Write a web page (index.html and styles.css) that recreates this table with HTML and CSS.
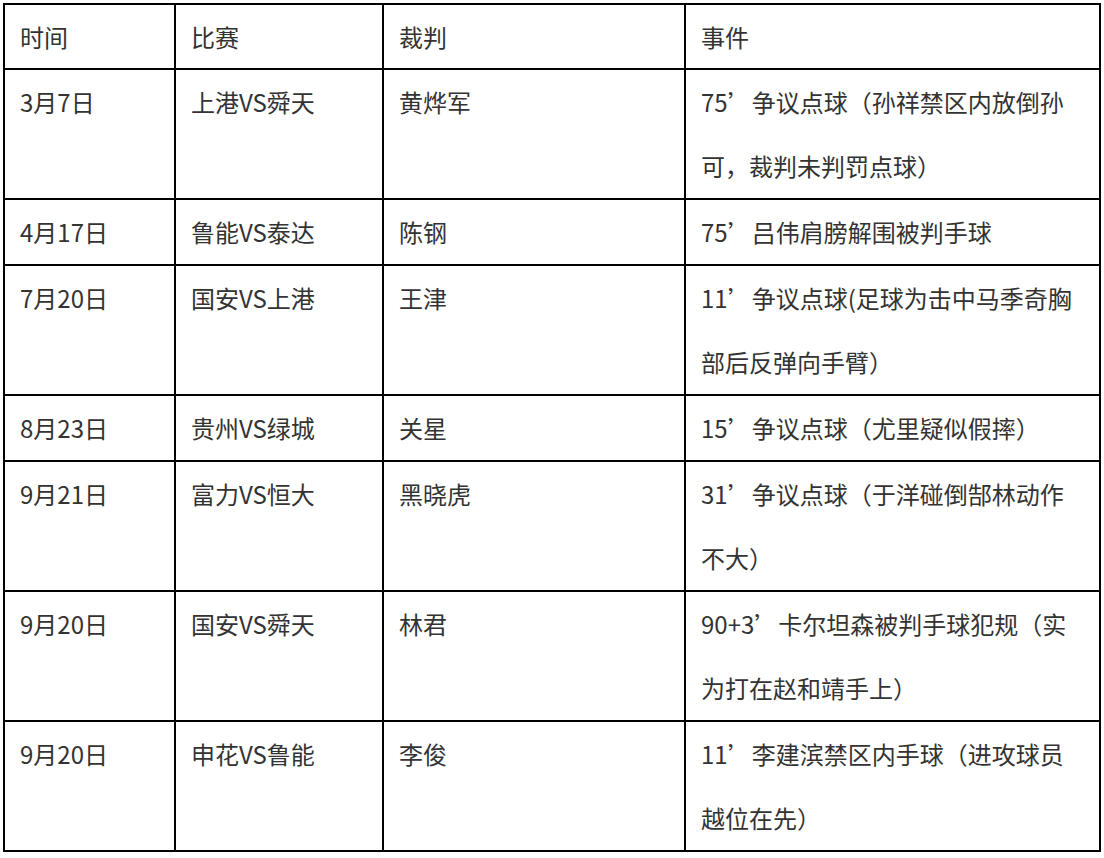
FILE: index.html
```html
<!DOCTYPE html>
<html lang="zh-CN">
<head>
<meta charset="utf-8">
<title>争议判罚</title>
<link rel="stylesheet" href="styles.css">
</head>
<body>
<div class="page">
<table class="calls">
  <colgroup>
    <col class="c-date">
    <col class="c-match">
    <col class="c-ref">
    <col class="c-event">
  </colgroup>
  <thead>
    <tr><th>时间</th><th>比赛</th><th>裁判</th><th>事件</th></tr>
  </thead>
  <tbody>
    <tr><td>3月7日</td><td>上港VS舜天</td><td>黄烨军</td><td>75’争议点球（孙祥禁区内放倒孙可，裁判未判罚点球）</td></tr>
    <tr><td>4月17日</td><td>鲁能VS泰达</td><td>陈钢</td><td>75’吕伟肩膀解围被判手球</td></tr>
    <tr><td>7月20日</td><td>国安VS上港</td><td>王津</td><td>11’争议点球(足球为击中马季奇胸部后反弹向手臂）</td></tr>
    <tr><td>8月23日</td><td>贵州VS绿城</td><td>关星</td><td>15’争议点球（尤里疑似假摔）</td></tr>
    <tr><td>9月21日</td><td>富力VS恒大</td><td>黑晓虎</td><td>31’争议点球（于洋碰倒郜林动作不大）</td></tr>
    <tr><td>9月20日</td><td>国安VS舜天</td><td>林君</td><td>90+3’卡尔坦森被判手球犯规（实为打在赵和靖手上）</td></tr>
    <tr><td>9月20日</td><td>申花VS鲁能</td><td>李俊</td><td>11’李建滨禁区内手球（进攻球员越位在先）</td></tr>
  </tbody>
</table>
</div>
</body>
</html>
```

FILE: styles.css
```css
html, body {
  margin: 0;
  padding: 0;
  background: #ffffff;
}

.page {
  padding: 3px 0 0 3px;
}

.calls {
  border-collapse: separate;
  border-spacing: 0;
  table-layout: fixed;
  width: 1098px;
  border-top: 2px solid #000;
  border-left: 2px solid #000;
  font-family: "Noto Sans CJK SC", "Noto Sans", sans-serif;
  font-size: 24px;
  color: #333333;
}

.c-date { width: 171px; }
.c-match { width: 208px; }
.c-ref { width: 302px; }
.c-event { width: 415px; }

.calls th,
.calls td {
  border-right: 2px solid #000;
  border-bottom: 2px solid #000;
  padding: 0 15px 0 15px;
  text-align: left;
  vertical-align: top;
  font-weight: normal;
  line-height: 64px;
  word-break: break-all;
}

.calls th {
  line-height: 63px;
}
```
